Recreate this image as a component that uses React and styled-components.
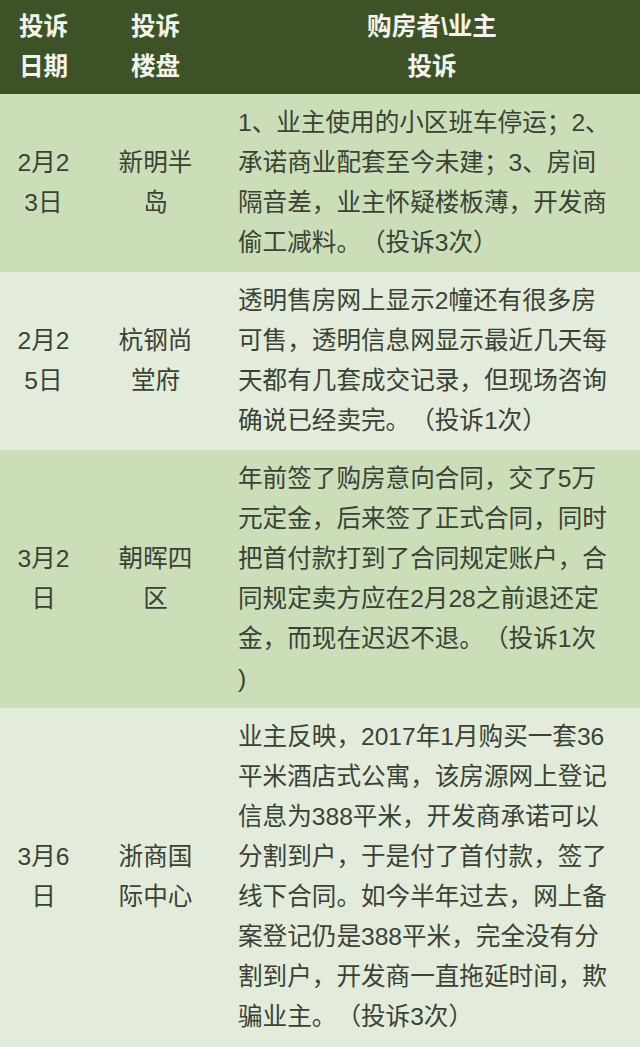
import styled, { createGlobalStyle } from "styled-components";

const GlobalStyle = createGlobalStyle`
  html, body {
    margin: 0;
    padding: 0;
    background: #e3ecda;
  }
  body {
    font-family: "Liberation Sans", "Noto Sans CJK SC", sans-serif;
  }
`;

const StyledTable = styled.div`
  width: 640px;
  display: flex;
  flex-direction: column;
`;

const StyledRow = styled.div`
  display: grid;
  grid-template-columns: 87px 137px 1fr;
  align-items: center;
  padding: ${(p) => (p.$head ? "7px 0" : "9px 0")};
  background-color: ${(p) =>
    p.$head ? "#3e5228" : p.$odd ? "#cbdeb8" : "#e3ecda"};
  color: ${(p) => (p.$head ? "#f4f4ec" : "#3a4236")};
  font-size: 24.6px;
  font-weight: ${(p) => (p.$head ? 700 : 400)};
  line-height: 40px;
  text-spacing-trim: space-all;
`;

const StyledCell = styled.div`
  display: flex;
  flex-direction: column;
  align-items: ${(p) => (p.$left ? "flex-start" : "center")};
  padding: ${(p) => (p.$left ? "0 0 0 14px" : "0")};
  white-space: nowrap;
`;

const StyledLine = styled.span`
  display: block;
`;

const rows = [
  {
    date: ["2月2", "3日"],
    estate: ["新明半", "岛"],
    text: [
      "1、业主使用的小区班车停运；2、",
      "承诺商业配套至今未建；3、房间",
      "隔音差，业主怀疑楼板薄，开发商",
      "偷工减料。（投诉3次）",
    ],
  },
  {
    date: ["2月2", "5日"],
    estate: ["杭钢尚", "堂府"],
    text: [
      "透明售房网上显示2幢还有很多房",
      "可售，透明信息网显示最近几天每",
      "天都有几套成交记录，但现场咨询",
      "确说已经卖完。（投诉1次）",
    ],
  },
  {
    date: ["3月2", "日"],
    estate: ["朝晖四", "区"],
    text: [
      "年前签了购房意向合同，交了5万",
      "元定金，后来签了正式合同，同时",
      "把首付款打到了合同规定账户，合",
      "同规定卖方应在2月28之前退还定",
      "金，而现在迟迟不退。（投诉1次",
      ")",
    ],
  },
  {
    date: ["3月6", "日"],
    estate: ["浙商国", "际中心"],
    text: [
      "业主反映，2017年1月购买一套36",
      "平米酒店式公寓，该房源网上登记",
      "信息为388平米，开发商承诺可以",
      "分割到户，于是付了首付款，签了",
      "线下合同。如今半年过去，网上备",
      "案登记仍是388平米，完全没有分",
      "割到户，开发商一直拖延时间，欺",
      "骗业主。（投诉3次）",
    ],
  },
];

function Lines({ items }) {
  return items.map((line, i) => <StyledLine key={i}>{line}</StyledLine>);
}

export default function App() {
  return (
    <>
      <GlobalStyle />
      <StyledTable>
        <StyledRow $head>
          <StyledCell>
            <Lines items={["投诉", "日期"]} />
          </StyledCell>
          <StyledCell>
            <Lines items={["投诉", "楼盘"]} />
          </StyledCell>
          <StyledCell>
            <Lines items={["购房者\\业主", "投诉"]} />
          </StyledCell>
        </StyledRow>
        {rows.map((row, i) => (
          <StyledRow key={i} $odd={i % 2 === 0}>
            <StyledCell>
              <Lines items={row.date} />
            </StyledCell>
            <StyledCell>
              <Lines items={row.estate} />
            </StyledCell>
            <StyledCell $left>
              <Lines items={row.text} />
            </StyledCell>
          </StyledRow>
        ))}
      </StyledTable>
    </>
  );
}
